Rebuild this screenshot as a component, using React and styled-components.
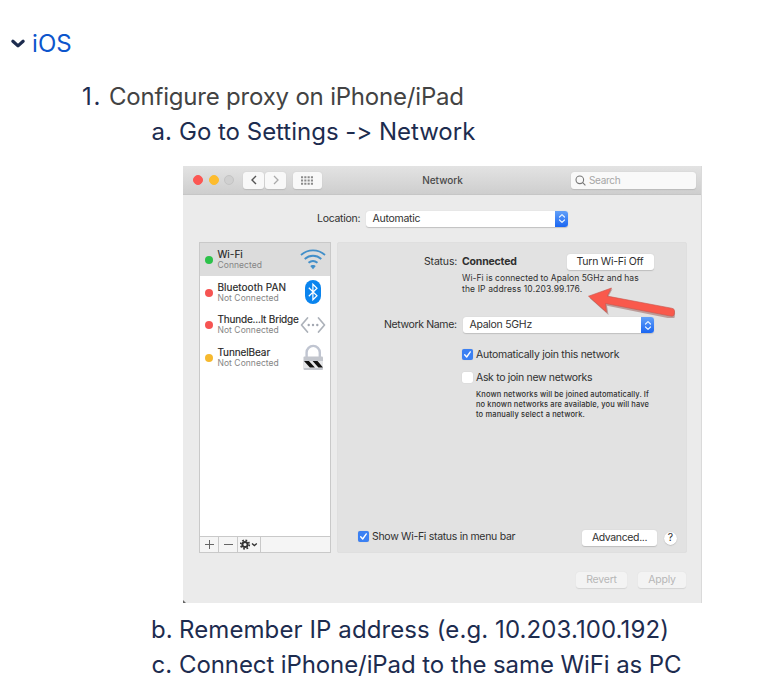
import React from "react";
import styled, { createGlobalStyle } from "styled-components";

const GlobalStyle = createGlobalStyle`
  * { box-sizing: border-box; }
  body { margin: 0; background: #fff; overflow: hidden; }
`;

const Page = styled.main`
  width: 766px;
  height: 681px;
  padding-top: 26px;
  overflow: hidden;
  background: #fff;
  color: #1d2c4f;
  font-family: Inter, "Liberation Sans", sans-serif;
  font-size: 24px;
  line-height: 35px;
  font-feature-settings: "calt" 0;
  white-space: nowrap;
`;

const Expander = styled.div`
  display: flex;
  align-items: center;
  height: 35px;
  padding-left: 11px;
  margin-bottom: 18px;
  color: #0c55cc;
`;

const Chevron = styled.svg`
  width: 14px;
  height: 10px;
  margin-right: 7px;
`;

const Text = styled.span`
  letter-spacing: ${(p) => p.$ls || 0}px;
`;

const Item = styled.div`
  display: flex;
  height: 35px;
  padding-left: ${(p) => p.$indent}px;
  color: ${(p) => p.$color || "inherit"};
`;

const Marker = styled.span`
  width: ${(p) => p.$w || 28}px;
  color: #1d2c4f;
  letter-spacing: ${(p) => p.$ls || 0}px;
`;

const Window = styled.section`
  width: 519px;
  height: 437px;
  margin: 17px 0 9px 183px;
  background: linear-gradient(45deg, #666 1.6px, transparent 2.6px), #ebebeb;
  color: #303030;
  font-size: 10.5px;
  line-height: 12px;
  border-right: 1px solid #dadada;
`;

const TitleBar = styled.header`
  display: grid;
  grid-template-columns: 194px 131px 1fr;
  align-items: center;
  height: 29px;
  background: linear-gradient(#e3e3e3, #cecece);
  border-bottom: 1px solid #c6c6c6;
`;

const Controls = styled.div`
  display: flex;
  align-items: center;
  padding-left: 10px;
`;

const Light = styled.i`
  width: 10px;
  height: 10px;
  margin-right: 5.5px;
  border-radius: 50%;
  background: ${(p) => p.$color};
  border: 1px solid ${(p) => p.$edge || p.$color};
`;

const ToolButton = styled.span`
  display: flex;
  align-items: center;
  justify-content: center;
  width: ${(p) => p.$w}px;
  height: 17px;
  margin-left: ${(p) => p.$gap || 0}px;
  border-radius: 3px;
  background: #f8f8f8;
  box-shadow: 0 0.5px 1px #bbb;
`;

const Title = styled.h1`
  margin: 0;
  text-align: center;
  font-size: 10px;
  line-height: 12px;
  font-weight: 500;
  letter-spacing: -0.05px;
  color: #4b4b4b;
`;

const Search = styled.div`
  display: flex;
  align-items: center;
  justify-self: end;
  gap: 3px;
  width: 125px;
  height: 17px;
  margin-right: 5px;
  padding-left: 4px;
  border-radius: 3px;
  background: #f9f9f9;
  box-shadow: 0 0.5px 1px #bbb;
  color: #a6a6a6;
  font-size: 10px;
  letter-spacing: -0.3px;
`;

const LocationRow = styled.div`
  display: flex;
  align-items: center;
  height: 16px;
  margin: 15.5px 0 15.5px 134px;
`;

const Label = styled.span`
  width: ${(p) => p.$w}px;
  flex: none;
  letter-spacing: ${(p) => p.$ls}px;
`;

const Select = styled.div`
  display: flex;
  align-items: center;
  justify-content: space-between;
  width: ${(p) => p.$w}px;
  height: 16px;
  padding-left: 7px;
  border-radius: 3px;
  background: #fff;
  box-shadow: 0 0.5px 1px #c0c0c0;
  letter-spacing: -0.28px;
`;

const Stepper = styled.span`
  display: flex;
  align-items: center;
  justify-content: center;
  width: 13px;
  height: 16px;
  border-radius: 0 3px 3px 0;
  background: linear-gradient(#62a0f8, #1a66f2);
`;

const Body = styled.div`
  display: flex;
  gap: 6px;
  height: 311px;
  padding-left: 16px;
`;

const Sidebar = styled.aside`
  display: flex;
  flex-direction: column;
  width: 132px;
  border: 1px solid #c9c9c9;
  background: #fff;
`;

const Services = styled.div`
  flex: 1;
`;

const Service = styled.div`
  display: grid;
  grid-template-columns: 17.5px 1fr 34px;
  align-items: center;
  height: 32.7px;
  background: ${(p) => (p.$selected ? "#dcdcdc" : "#fff")};
`;

const StatusDot = styled.i`
  width: 8px;
  height: 8px;
  margin: 1px 0 0 4.7px;
  border-radius: 50%;
  background: ${(p) => p.$color};
`;

const ServiceInfo = styled.div`
  display: flex;
  flex-direction: column;
  min-width: 0;
  padding-top: 1.5px;
`;

const ServiceName = styled.span`
  font-size: 10px;
  line-height: 11px;
  letter-spacing: ${(p) => p.$ls}px;
  color: #252525;
  -webkit-text-stroke: 0.15px #252525;
`;

const ServiceState = styled.span`
  font-size: 8.5px;
  line-height: 11px;
  letter-spacing: ${(p) => p.$ls}px;
  color: #858585;
`;

const ServiceIcon = styled.svg`
  width: 28px;
  height: 28px;
  justify-self: center;
`;

const SidebarTools = styled.footer`
  display: flex;
  height: 16px;
  border-top: 1px solid #c9c9c9;
  background: #f5f5f5;
`;

const SidebarTool = styled.span`
  display: flex;
  align-items: center;
  justify-content: center;
  width: ${(p) => p.$w}px;
  border-right: 1px solid #c9c9c9;
`;

const Panel = styled.div`
  display: flex;
  flex-direction: column;
  width: 350px;
  border: 1px solid #dfdfdf;
  border-radius: 2px;
  background: #e2e2e2;
`;

const StatusRow = styled.div`
  display: flex;
  align-items: center;
  height: 16px;
  margin: 11px 0 0 86px;
`;

const Strong = styled.strong`
  width: 104.5px;
  font-weight: 700;
  letter-spacing: -0.19px;
`;

const Button = styled.span`
  display: flex;
  align-items: center;
  justify-content: center;
  width: ${(p) => p.$w}px;
  height: 16px;
  border-radius: 3px;
  background: ${(p) => (p.$disabled ? "#f3f3f3" : "#fff")};
  color: ${(p) => (p.$disabled ? "#b7b7b7" : "#303030")};
  box-shadow: 0 0.5px 1px ${(p) => (p.$disabled ? "#d4d4d4" : "#bebebe")};
  letter-spacing: ${(p) => p.$ls}px;
`;

const Detail = styled.p`
  position: relative;
  display: flex;
  flex-direction: column;
  margin: 3px 0 0 124px;
  font-size: 8.5px;
  line-height: 10.5px;
`;

const Arrow = styled.svg`
  position: absolute;
  left: 123px;
  top: 8.5px;
  width: 94px;
  height: 36px;
`;

const NetworkRow = styled.div`
  display: flex;
  align-items: center;
  height: 16px;
  margin: 23px 0 0 46px;
`;

const CheckRow = styled.div`
  display: flex;
  align-items: center;
  gap: 3px;
  height: 12px;
  margin: ${(p) => p.$top}px 0 0 ${(p) => p.$left}px;
`;

const Box = styled.svg`
  width: 11px;
  height: 11px;
  border-radius: 2px;
  background: ${(p) => (p.$on ? "#3b80f3" : "#fff")};
  box-shadow: 0 0 1px #bbb;
`;

const Hint = styled.p`
  display: flex;
  flex-direction: column;
  margin: 6px 0 0 138px;
  font-size: 7.5px;
  line-height: 10px;
  font-weight: 500;
`;

const PanelFooter = styled.div`
  display: flex;
  align-items: center;
  justify-content: space-between;
  margin-top: auto;
  padding: 0 9px 6px 20px;
`;

const FooterCheck = styled.div`
  display: flex;
  align-items: center;
  gap: 3px;
  padding-bottom: 3px;
`;

const FooterActions = styled.div`
  display: flex;
  align-items: center;
  gap: 7px;
`;

const Help = styled.span`
  display: flex;
  align-items: center;
  justify-content: center;
  width: 13px;
  height: 13px;
  border-radius: 50%;
  background: #fff;
  box-shadow: 0 0.5px 1px #aaa;
`;

const Actions = styled.div`
  display: flex;
  justify-content: flex-end;
  gap: 11px;
  padding: 18.5px 15px 0 0;
`;

const Steps = () => (
  <Stepper>
    <svg width="8" height="11" viewBox="0 0 8 11" fill="none" stroke="#e6f2ff" strokeWidth="1.2" strokeLinecap="round" strokeLinejoin="round">
      <path d="M1.5 4 4 1.6 6.5 4M1.5 7 4 9.4 6.5 7" />
    </svg>
  </Stepper>
);

const Check = ({ on }) => (
  <Box $on={on} viewBox="0 0 11 11">
    {on && <path d="M2.7 5.8 4.7 8 8.3 2.9" fill="none" stroke="#fff" strokeWidth="1.4" strokeLinecap="round" strokeLinejoin="round" />}
  </Box>
);

const icons = {
  wifi: (
    <g fill="none" stroke="#428fc9" strokeWidth="1.9">
      <path d="M2 10c7-6.2 17-6.2 24 0M5.7 13.9c5-4.2 11.6-4.2 16.6 0M9.5 17.8c2.8-2.2 6.2-2.2 9 0" />
      <path d="M14 20c-1.3 0-2.2.5-2.8 1.1L14 24.2l2.8-3.1c-.6-.6-1.5-1.1-2.8-1.1z" fill="#428fc9" stroke="none" />
    </g>
  ),
  bluetooth: (
    <>
      <rect x="6" y="2" width="16" height="24" rx="8" fill="#0a84ee" />
      <path d="m9.8 9.8 8.2 8-4.1 4V6.2l4.1 4-8.2 8" fill="none" stroke="#fff" strokeWidth="1.2" />
    </>
  ),
  bridge: (
    <>
      <path d="m8.5 7-6 7 6 7M19.5 7l6 7-6 7" fill="none" stroke="#adb2ba" strokeWidth="1.7" strokeLinecap="round" strokeLinejoin="round" />
      <g fill="#a2a7b1"><circle cx="9.7" cy="14" r="1.2" /><circle cx="14" cy="14" r="1.2" /><circle cx="18.3" cy="14" r="1.2" /></g>
    </>
  ),
  lock: (
    <>
      <path d="M7.6 16V9.5a6.6 6.6 0 0 1 13.2 0V16" fill="none" stroke="#c0c5d1" strokeWidth="2.4" />
      <rect x="4.5" y="13.5" width="19.5" height="13.5" rx="1" fill="#c3c6cd" />
      <path d="M4.5 18h19.5v7H4.5z" fill="#e6e7e9" />
      <path d="M5 18h4.9l6 6.4h-5zM13.6 18h4.9l5.3 6.2v.2h-4.4z" fill="#111" />
    </>
  ),
};

const services = [
  { name: "Wi-Fi", state: "Connected", dot: "#2cc24a", icon: "wifi", ls: 0, sls: 0.05, selected: true },
  { name: "Bluetooth PAN", state: "Not Connected", dot: "#f65452", icon: "bluetooth", ls: 0.04, sls: 0.05 },
  { name: "Thunde...lt Bridge", state: "Not Connected", dot: "#f65452", icon: "bridge", ls: -0.18, sls: 0.05 },
  { name: "TunnelBear", state: "Not Connected", dot: "#f6b92f", icon: "lock", ls: -0.1, sls: 0.05 },
];

const NetworkWindow = () => (
  <Window>
    <TitleBar>
      <Controls>
        <Light $color="#fc5753" />
        <Light $color="#fdbc2e" />
        <Light $color="#d0d0d0" $edge="#c4c4c4" />
        <ToolButton $w={21} $gap={3.5}>
          <svg width="8" height="10" viewBox="0 0 8 10"><path d="M6 1 2 5l4 4" fill="none" stroke="#555" strokeWidth="1.4" /></svg>
        </ToolButton>
        <ToolButton $w={21} $gap={1}>
          <svg width="8" height="10" viewBox="0 0 8 10"><path d="m2 1 4 4-4 4" fill="none" stroke="#aaa" strokeWidth="1.3" /></svg>
        </ToolButton>
        <ToolButton $w={29} $gap={6.5}>
          <svg width="12" height="9" viewBox="0 0 12 9"><path d="M0 1.2h12M0 4.5h12M0 7.8h12" stroke="#8a8a8a" strokeWidth="2" strokeDasharray="2.1 1.2" /></svg>
        </ToolButton>
      </Controls>
      <Title>Network</Title>
      <Search>
        <svg width="11" height="11" viewBox="0 0 11 11" fill="none" stroke="#777" strokeWidth="1.1"><circle cx="4.8" cy="4.8" r="3.8" /><path d="m7.7 7.7 2.7 2.7" /></svg>
        Search
      </Search>
    </TitleBar>
    <LocationRow>
      <Label $w={48.5} $ls={-0.29}>Location:</Label>
      <Select $w={202.5}>Automatic<Steps /></Select>
    </LocationRow>
    <Body>
      <Sidebar>
        <Services>
          {services.map((s) => (
            <Service key={s.name} $selected={s.selected}>
              <StatusDot $color={s.dot} />
              <ServiceInfo>
                <ServiceName $ls={s.ls}>{s.name}</ServiceName>
                <ServiceState $ls={s.sls}>{s.state}</ServiceState>
              </ServiceInfo>
              <ServiceIcon viewBox="0 0 28 28">{icons[s.icon]}</ServiceIcon>
            </Service>
          ))}
        </Services>
        <SidebarTools>
          <SidebarTool $w={19}>
            <svg width="9" height="9" viewBox="0 0 9 9"><path d="M0 4.5h9M4.5 0v9" stroke="#666" /></svg>
          </SidebarTool>
          <SidebarTool $w={19}>
            <svg width="9" height="9" viewBox="0 0 9 9"><path d="M0 4.5h9" stroke="#666" /></svg>
          </SidebarTool>
          <SidebarTool $w={23}>
            <svg width="18" height="11" viewBox="0 0 18 11">
              <circle cx="5" cy="5.5" r="2.6" fill="none" stroke="#333" strokeWidth="2" />
              <circle cx="5" cy="5.5" r="4.3" fill="none" stroke="#333" strokeWidth="1.7" strokeDasharray="1.7 1.677" />
              <path d="m12 4.5 2.4 2 2.4-2" fill="none" stroke="#333" strokeWidth="1.4" />
            </svg>
          </SidebarTool>
        </SidebarTools>
      </Sidebar>
      <Panel>
        <StatusRow>
          <Label $w={38} $ls={-0.17}>Status:</Label>
          <Strong>Connected</Strong>
          <Button $w={87} $ls={-0.24}>Turn Wi-Fi Off</Button>
        </StatusRow>
        <Detail>
          <Text $ls={0.04}>Wi-Fi is connected to Apalon 5GHz and has</Text>
          <Text $ls={0.13}>the IP address 10.203.99.176.</Text>
          <Arrow viewBox="0 0 94 36">
            <path d="M4.3 15.2 27 6l-4.4 8.1 64.3 13.1c3 .7 3 2.4 2.3 6.8-.5 2-2 2-4 1.6L21.5 22.8 23 32z" fill="#8f4a43" opacity=".45" transform="translate(.5 1)" />
            <path d="M3.5 14.2 26.5 6l-4.3 8.1 64.3 12.1c2.5.5 3.3 1.4 3 4.2-.3 3.2-1.3 4.2-3.8 3.7L20.5 21.5l1 8.7z" fill="#f9594c" stroke="#c6564d" strokeWidth=".6" />
          </Arrow>
        </Detail>
        <NetworkRow>
          <Label $w={78.5} $ls={-0.36}>Network Name:</Label>
          <Select $w={191.5}>Apalon 5GHz<Steps /></Select>
        </NetworkRow>
        <CheckRow $top={15.5} $left={124}>
          <Check on />
          <Text $ls={-0.28}>Automatically join this network</Text>
        </CheckRow>
        <CheckRow $top={11} $left={124}>
          <Check />
          <Text $ls={-0.34}>Ask to join new networks</Text>
        </CheckRow>
        <Hint>
          <Text $ls={0.11}>Known networks will be joined automatically. If</Text>
          <Text $ls={0.11}>no known networks are available, you will have</Text>
          <Text $ls={0.14}>to manually select a network.</Text>
        </Hint>
        <PanelFooter>
          <FooterCheck>
            <Check on />
            <Text $ls={-0.3}>Show Wi-Fi status in menu bar</Text>
          </FooterCheck>
          <FooterActions>
            <Button $w={75} $ls={-0.37}>Advanced...</Button>
            <Help>?</Help>
          </FooterActions>
        </PanelFooter>
      </Panel>
    </Body>
    <Actions>
      <Button $w={51} $ls={-0.2} $disabled>Revert</Button>
      <Button $w={48} $ls={-0.2} $disabled>Apply</Button>
    </Actions>
  </Window>
);

export default function App() {
  return (
    <Page>
      <GlobalStyle />
      <Expander>
        <Chevron viewBox="0 0 14 10"><path d="m1.9 2.3 5.1 4.6 5.1-4.6" fill="none" stroke="#1d2c4f" strokeWidth="3.2" strokeLinecap="round" strokeLinejoin="round" /></Chevron>
        <Text $ls={0.1}>iOS</Text>
      </Expander>
      <Item $indent={82} $color="#434343"><Marker $w={27} $ls={1.8}>1.</Marker><Text $ls={-0.2}>Configure proxy on iPhone/iPad</Text></Item>
      <Item $indent={151.5}><Marker $w={27.5}>a.</Marker><Text $ls={-0.01}>Go to Settings -&gt; Network</Text></Item>
      <NetworkWindow />
      <Item $indent={151}><Marker>b.</Marker><Text $ls={0.1}>Remember IP address (e.g. 10.203.100.192)</Text></Item>
      <Item $indent={151.5}><Marker $w={27.5}>c.</Marker><Text $ls={-0.1}>Connect iPhone/iPad to the same WiFi as PC</Text></Item>
    </Page>
  );
}
